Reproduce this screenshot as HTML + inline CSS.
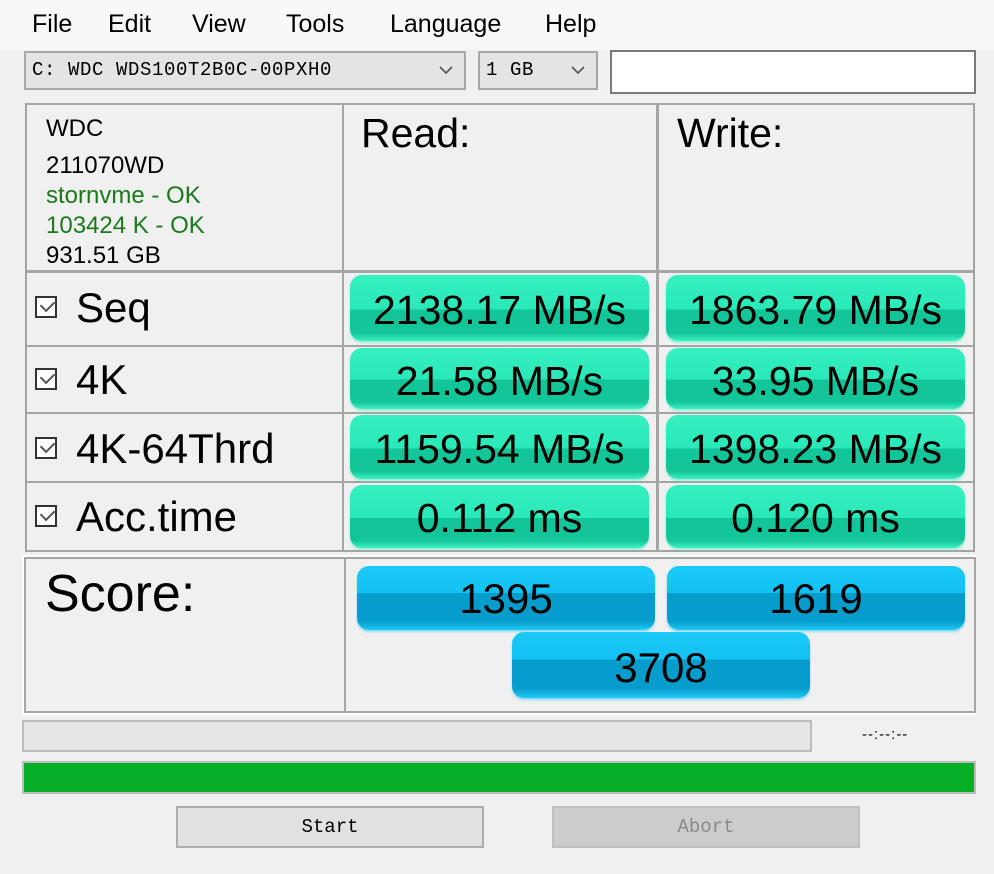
<!DOCTYPE html>
<html><head><meta charset="utf-8"><style>
*{margin:0;padding:0;box-sizing:border-box}
body{width:994px;height:874px;background:#f0f0f0;position:relative;overflow:hidden;font-family:"Liberation Sans",Arial,sans-serif;color:#000}
.a{position:absolute}
.menu{left:0;top:0;width:994px;height:50px;background:#f8f8f8}
.mi{position:absolute;top:10px;font-size:25px}
.cb{border:2px solid #a8a8a8;background:#e4e4e4;font-family:"Liberation Mono",monospace;font-size:19px;letter-spacing:0.6px;padding:6px 0 0 6px}
.cell{border:2px solid #a4a4a4}
.g{border-radius:12px;background:linear-gradient(#36f0c0 0,#2ae8b8 52%,#12c699 52%,#12c699 88%,#3ef0c4 100%);text-align:center;font-size:41px;white-space:nowrap;box-shadow:0 2px 2px rgba(60,240,190,.5)}
.b{border-radius:12px;background:linear-gradient(#1cc9f6 0,#12c2f4 42%,#069dcc 42%,#069dcc 86%,#20c8f6 100%);text-align:center;font-size:42px;box-shadow:0 2px 2px rgba(30,200,250,.5)}
.lbl{font-size:42px}
.chk{width:22px;height:22px;border:2px solid #333;background:#fff}
.chk:after{content:"";position:absolute;left:4px;top:2px;width:11px;height:7px;border-left:2px solid #555;border-bottom:2px solid #555;transform:rotate(-45deg)}
.btn{border:2px solid #adadad;background:#e1e1e1;font-family:"Liberation Mono",monospace;font-size:19px;text-align:center;padding-top:8px}
</style></head><body>
<div class="a menu">
<span class="mi" style="left:32px">File</span><span class="mi" style="left:108px">Edit</span><span class="mi" style="left:192px">View</span><span class="mi" style="left:286px">Tools</span><span class="mi" style="left:390px">Language</span><span class="mi" style="left:545px">Help</span>
</div>
<div class="a cb" style="left:24px;top:51px;width:442px;height:39px">C: WDC WDS100T2B0C-00PXH0</div>
<svg class="a" style="left:438px;top:64px" width="16" height="12"><path d="M2 3 L8 9 L14 3" stroke="#555" stroke-width="1.6" fill="none"/></svg>
<div class="a cb" style="left:478px;top:51px;width:120px;height:39px">1 GB</div>
<svg class="a" style="left:570px;top:64px" width="16" height="12"><path d="M2 3 L8 9 L14 3" stroke="#555" stroke-width="1.6" fill="none"/></svg>
<div class="a" style="left:610px;top:50px;width:366px;height:44px;border:2px solid #7a7a7a;background:#fff"></div>

<div class="a cell" style="left:25px;top:103px;width:319px;height:169px"></div>
<div class="a cell" style="left:342px;top:103px;width:316px;height:169px"></div>
<div class="a cell" style="left:657px;top:103px;width:318px;height:169px"></div>
<div class="a" style="left:46px;top:114px;font-size:24px;line-height:30px">WDC</div>
<div class="a" style="left:46px;top:151px;font-size:24px;line-height:30px">211070WD<br><span style="color:#1a7a1a">stornvme - OK<br>103424 K - OK</span><br>931.51 GB</div>
<div class="a" style="left:361px;top:110px;font-size:41px">Read:</div>
<div class="a" style="left:677px;top:110px;font-size:41px">Write:</div>

<div class="a cell" style="left:25px;top:271px;width:319px;height:76px"></div>
<div class="a cell" style="left:342px;top:271px;width:316px;height:76px"></div>
<div class="a cell" style="left:657px;top:271px;width:318px;height:76px"></div>
<div class="a cell" style="left:25px;top:345px;width:319px;height:69px"></div>
<div class="a cell" style="left:342px;top:345px;width:316px;height:69px"></div>
<div class="a cell" style="left:657px;top:345px;width:318px;height:69px"></div>
<div class="a cell" style="left:25px;top:412px;width:319px;height:71px"></div>
<div class="a cell" style="left:342px;top:412px;width:316px;height:71px"></div>
<div class="a cell" style="left:657px;top:412px;width:318px;height:71px"></div>
<div class="a cell" style="left:25px;top:481px;width:319px;height:71px"></div>
<div class="a cell" style="left:342px;top:481px;width:316px;height:71px"></div>
<div class="a cell" style="left:657px;top:481px;width:318px;height:71px"></div>

<div class="a chk" style="left:35px;top:296px"></div><div class="a lbl" style="left:76px;top:284px">Seq</div>
<div class="a chk" style="left:35px;top:368px"></div><div class="a lbl" style="left:76px;top:356px">4K</div>
<div class="a chk" style="left:35px;top:437px"></div><div class="a lbl" style="left:76px;top:425px">4K-64Thrd</div>
<div class="a chk" style="left:35px;top:505px"></div><div class="a lbl" style="left:76px;top:493px">Acc.time</div>

<div class="a g" style="left:350px;top:275px;width:299px;height:66px;line-height:70px">2138.17 MB/s</div>
<div class="a g" style="left:666px;top:275px;width:299px;height:66px;line-height:70px">1863.79 MB/s</div>
<div class="a g" style="left:350px;top:348px;width:299px;height:61px;line-height:66px">21.58 MB/s</div>
<div class="a g" style="left:666px;top:348px;width:299px;height:61px;line-height:66px">33.95 MB/s</div>
<div class="a g" style="left:350px;top:415px;width:299px;height:64px;line-height:68px">1159.54 MB/s</div>
<div class="a g" style="left:666px;top:415px;width:299px;height:64px;line-height:68px">1398.23 MB/s</div>
<div class="a g" style="left:350px;top:485px;width:299px;height:63px;line-height:66px">0.112 ms</div>
<div class="a g" style="left:666px;top:485px;width:299px;height:63px;line-height:66px">0.120 ms</div>

<div class="a" style="left:22px;top:555px;width:954px;height:160px;border:2px solid #fff"></div>
<div class="a cell" style="left:24px;top:557px;width:322px;height:156px"></div>
<div class="a cell" style="left:344px;top:557px;width:632px;height:156px"></div>
<div class="a" style="left:45px;top:564px;font-size:52px">Score:</div>
<div class="a b" style="left:357px;top:566px;width:298px;height:64px;line-height:66px">1395</div>
<div class="a b" style="left:667px;top:566px;width:298px;height:64px;line-height:66px">1619</div>
<div class="a b" style="left:512px;top:632px;width:298px;height:66px;line-height:72px">3708</div>

<div class="a" style="left:22px;top:720px;width:790px;height:32px;border:2px solid #bcbcbc;background:#e6e6e6"></div>
<div class="a" style="left:862px;top:726px;font-size:15px;letter-spacing:1px">--:--:--</div>
<div class="a" style="left:22px;top:761px;width:954px;height:33px;border:2px solid #bcbcbc;background:#07ae28"></div>
<div class="a btn" style="left:176px;top:806px;width:308px;height:42px">Start</div>
<div class="a btn" style="left:552px;top:806px;width:308px;height:42px;background:#cccccc;border-color:#bfbfbf;color:#8a8a8a">Abort</div>
</body></html>
